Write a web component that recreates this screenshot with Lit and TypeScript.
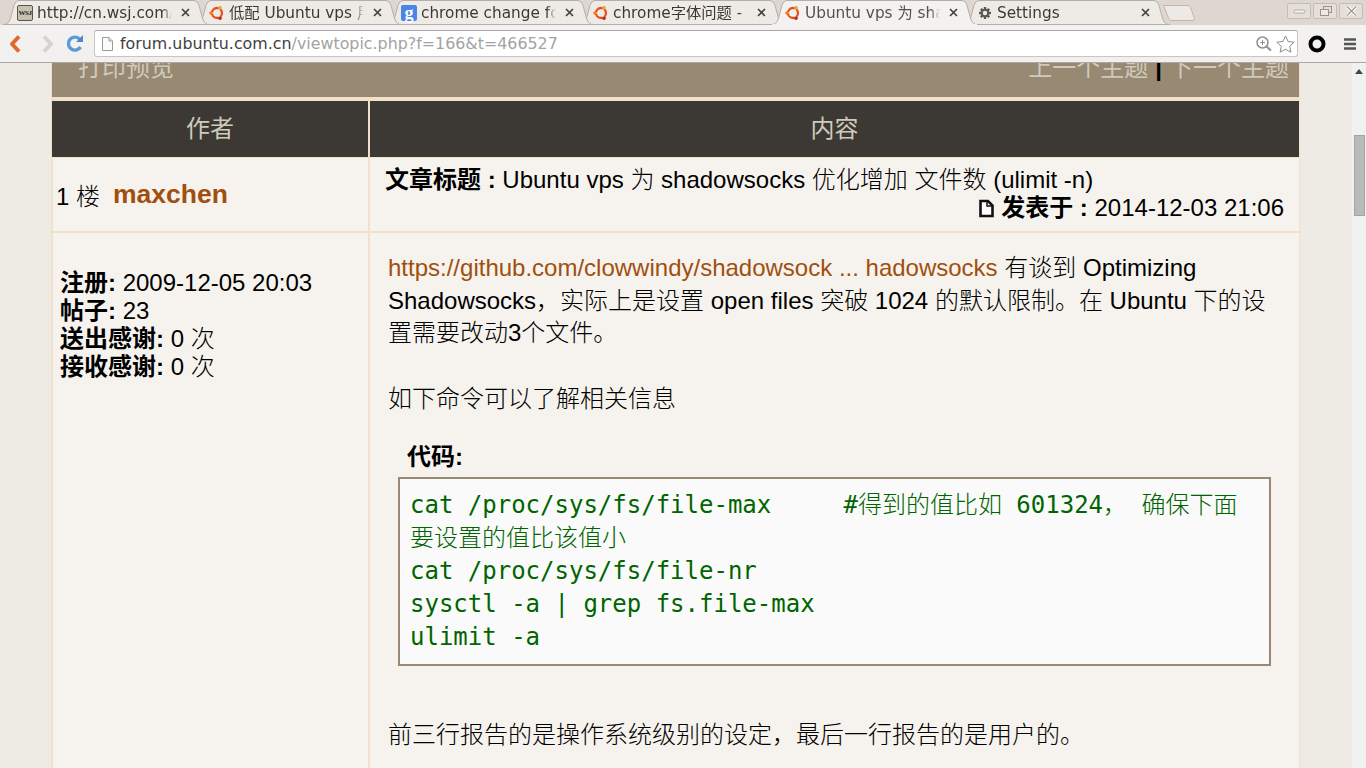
import { LitElement, html, css, svg } from "lit";
import { customElement } from "lit/decorators.js";

const ubuntu = html`<svg class="fav" viewBox="0 0 16 16">
  <circle cx="8" cy="8" r="5" fill="none" stroke="#e2521d" stroke-width="2.300"/>
  <g stroke="#f0ede9" stroke-width="1.300"><line x1="8" y1="8" x2="1" y2="8"/><line x1="8" y1="8" x2="11.500" y2="2"/><line x1="8" y1="8" x2="11.500" y2="14"/></g>
  <circle cx="2" cy="8" r="1.800" fill="#f47b20"/><circle cx="11" cy="2.800" r="1.800" fill="#f9a01b"/><circle cx="11" cy="13.200" r="1.800" fill="#c9251b"/>
</svg>`;
const wsj = html`<span class="wsj">WSJ</span>`;
const goog = html`<span class="goog">g</span>`;
const gear = html`<svg class="fav" viewBox="0 0 16 16">
  <g stroke="#5a5652" stroke-width="2.400"><line x1="8" y1="2" x2="8" y2="14"/><line x1="2" y1="8" x2="14" y2="8"/><line x1="3.800" y1="3.800" x2="12.200" y2="12.200"/><line x1="12.200" y1="3.800" x2="3.800" y2="12.200"/></g>
  <circle cx="8" cy="8" r="3.200" fill="#f0ede9" stroke="#5a5652" stroke-width="2"/>
</svg>`;

const tabs = [
  { icon: wsj, title: "http://cn.wsj.com/", z: 6 },
  { icon: ubuntu, title: "低配 Ubuntu vps 用", z: 5 },
  { icon: goog, title: "chrome change font", z: 4 },
  { icon: ubuntu, title: "chrome字体问题 - 最", z: 3 },
  { icon: ubuntu, title: "Ubuntu vps 为 shadow", z: 9, active: true },
  { icon: gear, title: "Settings", z: 1 },
];

@customElement("app-root")
export class AppRoot extends LitElement {
  static styles = css`
    :host { display: flex; flex-direction: column; width: 1366px; height: 768px; overflow: hidden;
      font-family: "Liberation Sans", "Noto Sans CJK SC", sans-serif; font-size: 24px; font-weight: 300; color: #000; background: #eeeae4; }
    strong { font-weight: 700; }
    .strip { height: 25px; background: #dfd6d0; display: flex; padding-left: 3px; position: relative; flex: none; }
    .tab { position: relative; width: 207px; height: 25px; margin-right: -15px; flex: none;
      font: 400 15.300px "DejaVu Sans", "Noto Sans CJK SC", sans-serif; color: #3d3835; }
    .tab.active { color: #55514e; }
    .tab > svg.shape { position: absolute; inset: 0; }
    .tab-in { position: relative; display: flex; align-items: center; padding: 0 0 0 14px; box-sizing: border-box; height: 25px; }
    .fav { width: 16px; height: 16px; flex: none; }
    .title { width: 135px; margin-left: 4px; white-space: nowrap; overflow: hidden; line-height: 24px;
      -webkit-mask-image: linear-gradient(90deg, #000 93%, transparent); mask-image: linear-gradient(90deg, #000 93%, transparent); }
    .x { width: 9px; height: 9px; margin-left: 9px; flex: none; }
    .wsj { width: 16px; height: 16px; border: 1px solid #555; border-radius: 2px; background: #c8c1b1; box-sizing: border-box;
      font: bold 7px "Liberation Serif", serif; color: #222; display: flex; align-items: center; justify-content: center; overflow: hidden; letter-spacing: -.5px; flex: none; }
    .goog { width: 16px; height: 16px; border-radius: 2px; background: #4a85e8; color: #fff; font: bold 18px "Liberation Serif", serif;
      display: flex; align-items: center; justify-content: center; line-height: 12px; flex: none; }
    .newtab { position: absolute; left: 1163px; top: 5px; }
    .win { position: absolute; right: 3px; top: 3px; display: flex; gap: 2px; }
    .wbtn { width: 24px; height: 16px; box-sizing: border-box; border: 1px solid #c5bcb5; border-radius: 2px; background: #e5dfda; display: flex; align-items: center; justify-content: center; }
    .toolbar { height: 37px; flex: none; background: linear-gradient(#f4f2f0, #f2f0ee); border-bottom: 1px solid #aaa8a5; box-sizing: content-box; display: flex; align-items: center; padding-left: 8px; }
    .tb-ic { width: 16px; height: 20px; flex: none; }
    .addr { margin-left: 10px; width: 1204px; height: 27px; box-sizing: border-box; background: #fff; border: 1px solid #c9c6c3; border-top-color: #aaa7a4; border-radius: 3px;
      display: flex; align-items: center; font: 400 15.870px "DejaVu Sans", sans-serif; color: #3f3f3f; padding-left: 6px; }
    .addr .path { color: #a3a3a3; }
    .addr .url { margin-left: 6px; flex: 1; }
    .addr svg { flex: none; }
    .body { flex: 1; display: flex; overflow: hidden; min-height: 0; }
    .page { flex: 1; overflow: hidden; padding-left: 51px; }
    .sheet { width: 1249px; box-sizing: border-box; border: solid #f0e2c8; border-width: 0 1px; background: #f0e2c8; margin-top: -28px; }
    .band { height: 62px; background: #988972; display: flex; justify-content: space-between; align-items: flex-start; padding: 21px 10px 0 26px; box-sizing: border-box; color: #cfcabb; margin-bottom: 4px; line-height: 24px; font-weight: 400; }
    .band b { color: #000; font-weight: bold; margin: 0 7px; }
    .grid { display: grid; grid-template-columns: 316px 929px; column-gap: 2px; }
    .th { height: 56px; background: #3c3934; color: #cfcabb; display: flex; align-items: center; justify-content: center; margin-bottom: 1px; padding-bottom: 6px; box-sizing: border-box; font-weight: 400; }
    .c1 { height: 73px; background: #f6f3ee; margin-bottom: 2px; box-sizing: border-box; }
    .floor { display: flex; align-items: center; padding: 0 0 1px 3px; border-left: 1px solid #f0e2c8; white-space: pre; }
    .floor a { color: #a04f0e; font-weight: bold; font-size: 26.500px; margin-left: 13px; }
    .subject { padding: 8px 15px 0 15px; line-height: 28px; }
    .posted { display: flex; justify-content: flex-end; align-items: center; }
    .posted svg { margin-right: 6px; }
    .profile { background: #f6f3ee; padding: 36px 0 0 7px; border-left: 1px solid #f0e2c8; line-height: 28px; height: 540px; box-sizing: border-box; }
    .content { background: #f6f3ee; padding: 19px 18px 0 18px; line-height: 32.600px; height: 540px; box-sizing: border-box; }
    .content a { color: #a04f0e; }
    .content p { margin: 0; }
    .content p.gap1 { margin-top: 33px; }
    .codehead { font-weight: bold; margin: 25px 0 0 19px; line-height: 33px; }
    .code { margin: 4px 10px 0 10px; border: 2px solid #988972; background: #fafafa; color: #006400; height: 189px; box-sizing: border-box;
      padding: 10px 10px 0 10px; font: 300 24px/33px "DejaVu Sans Mono", "Noto Sans CJK SC", monospace; white-space: pre-wrap; }
    .content p.after { margin-top: 53px; }
    .sb { width: 14px; flex: none; background: #f1f1f1; display: flex; flex-direction: column; align-items: center; }
    .sb svg { margin-top: 6px; }
    .thumb { width: 11px; height: 81px; box-sizing: border-box; background: #b9b9b9; border: 1px solid #a4a4a4; margin-top: 61px; }
  `;

  private tabShape(active: boolean) {
    const fill = active ? "#f4f2f0" : "#eeebe7";
    return html`<svg class="shape" width="207" height="25" viewBox="0 0 207 25">
      <path d="M0 24.500C4 24.500 6 23 7.500 18L11 5.500C12 2 14 .5 17 .5H190C193 .5 195 2 196 5.500L199.500 18C201 23 203 24.500 207 24.500Z" fill="${fill}" stroke="#b3aea9" stroke-width="1"/>
      ${active ? svg`<rect x="1" y="24" width="205" height="1" fill="${fill}"/>` : ""}
    </svg>`;
  }

  render() {
    return html`
      <div class="strip">
        ${tabs.map((t) => html`
          <div class="tab ${t.active ? "active" : ""}" style="z-index:${t.z}">
            ${this.tabShape(!!t.active)}
            <div class="tab-in">${t.icon}<span class="title">${t.title}</span>
              <svg class="x" viewBox="0 0 9 9"><path d="M1 1l7 7M8 1L1 8" stroke="#45413e" stroke-width="1.700"/></svg>
            </div>
          </div>`)}
        <svg class="newtab" width="34" height="16" viewBox="0 0 34 16"><path d="M1 .5H24C26 .5 27 1.500 28 4L31 12C32 14.500 31 15.500 29 15.500H9C7 15.500 6 14.500 5 12L2 4C1.200 1.500 0 .5 1 .5Z" fill="#eee9e4" stroke="#bdb5af"/></svg>
        <div class="win">
          <div class="wbtn"><svg width="13" height="5"><rect x="1" y="1" width="11" height="3" rx="1" fill="#f4f1ee" stroke="#a9a29c" stroke-width=".8"/></svg></div>
          <div class="wbtn"><svg width="13" height="12"><rect x="4.500" y="1.500" width="8" height="6" fill="none" stroke="#99928c"/><rect x="1.500" y="4.500" width="8" height="6" fill="#eee9e4" stroke="#99928c"/></svg></div>
          <div class="wbtn"><svg width="13" height="12"><path d="M2 1.500l9 9M11 1.500l-9 9" stroke="#fff" stroke-width="3"/><path d="M2 1.500l9 9M11 1.500l-9 9" stroke="#a09890" stroke-width="1.200" fill="none"/></svg></div>
        </div>
      </div>
      <div class="toolbar">
        <svg class="tb-ic" viewBox="0 0 16 20"><path d="M11 2.500L4 10l7 7.500" fill="none" stroke="#e2672f" stroke-width="4" stroke-linejoin="round"/></svg>
        <svg class="tb-ic" style="margin-left:15px" viewBox="0 0 16 20"><path d="M5 2.500l7 7.500-7 7.500" fill="none" stroke="#d6d4d1" stroke-width="4" stroke-linejoin="round"/></svg>
        <svg class="tb-ic" style="margin-left:11px;width:18px" viewBox="0 0 18 20"><path d="M14.500 13a6.500 6.500 0 1 1-1-8" fill="none" stroke="#5b9bd8" stroke-width="3.400"/><path d="M10 8h7V1z" fill="#4a88c9"/></svg>
        <div class="addr">
          <svg width="13" height="16" viewBox="0 0 13 16"><path d="M1.500 1.500h6.500l3.500 3.500v9.500h-10z" fill="#fbfbfb" stroke="#9a9a9a"/><path d="M8 1.500v3.500h3.500" fill="#e5e5e5" stroke="#9a9a9a"/></svg>
          <span class="url">forum.ubuntu.com.cn<span class="path">/viewtopic.php?f=166&amp;t=466527</span></span>
          <svg width="18" height="18" viewBox="0 0 18 18"><circle cx="7.500" cy="7.500" r="5.500" fill="#fff" stroke="#8f8f8f" stroke-width="1.500"/><path d="M5 7.500h5M7.500 5v5" stroke="#8f8f8f"/><path d="M11.500 11.500l4.500 4" stroke="#8f8f8f" stroke-width="2"/></svg>
          <svg style="margin:0 2px 0 3px" width="19" height="18" viewBox="0 0 19 18"><path d="M9.500 1l2.600 5.500 6 .7-4.400 4.100 1.200 5.900-5.400-3-5.400 3 1.200-5.900L.9 7.200l6-.7z" fill="#fff" stroke="#8a8a8a"/></svg>
        </div>
        <svg style="margin-left:10px;flex:none" width="18" height="18" viewBox="0 0 18 18"><circle cx="9" cy="9" r="6.500" fill="none" stroke="#000" stroke-width="4"/></svg>
        <svg style="margin-left:17px;flex:none" width="14" height="14" viewBox="0 0 14 14"><path d="M1 2.500h12M1 7h12M1 11.500h12" stroke="#555" stroke-width="2.500"/></svg>
      </div>
      <div class="body">
        <div class="page">
          <div class="sheet">
            <div class="band"><span>打印预览</span><span>上一个主题<b>|</b>下一个主题</span></div>
            <div class="grid">
              <div class="th">作者</div>
              <div class="th">内容</div>
              <div class="c1 floor">1 楼<a>maxchen</a></div>
              <div class="c1 subject">
                <div><strong>文章标题 :</strong> Ubuntu vps 为 shadowsocks 优化增加 文件数 (ulimit -n)</div>
                <div class="posted"><svg width="17" height="19" viewBox="0 0 17 19"><path d="M2.500 2h7.500l4.500 4.500v10.500h-12z" fill="#fff" stroke="#111" stroke-width="2.600"/><path d="M9 2v5h5" fill="none" stroke="#111" stroke-width="1.500"/></svg><strong>发表于 :&nbsp;</strong>2014-12-03 21:06</div>
              </div>
              <div class="profile">
                <div><strong>注册:</strong> 2009-12-05 20:03</div>
                <div><strong>帖子:</strong> 23</div>
                <div><strong>送出感谢:</strong> 0 次</div>
                <div><strong>接收感谢:</strong> 0 次</div>
              </div>
              <div class="content">
                <p><a>https://github.com/clowwindy/shadowsock ... hadowsocks</a> 有谈到 Optimizing Shadowsocks，实际上是设置 open files 突破 1024 的默认限制。在 Ubuntu 下的设置需要改动3个文件。</p>
                <p class="gap1">如下命令可以了解相关信息</p>
                <div class="codehead">代码:</div>
                <div class="code">cat /proc/sys/fs/file-max     #得到的值比如 601324， 确保下面要设置的值比该值小
cat /proc/sys/fs/file-nr
sysctl -a | grep fs.file-max
ulimit -a</div>
                <p class="after">前三行报告的是操作系统级别的设定，最后一行报告的是用户的。</p>
              </div>
            </div>
          </div>
        </div>
        <div class="sb">
          <svg width="8" height="5" viewBox="0 0 8 5"><path d="M4 0L8 5H0z" fill="#444"/></svg>
          <div class="thumb"></div>
        </div>
      </div>
    `;
  }
}
